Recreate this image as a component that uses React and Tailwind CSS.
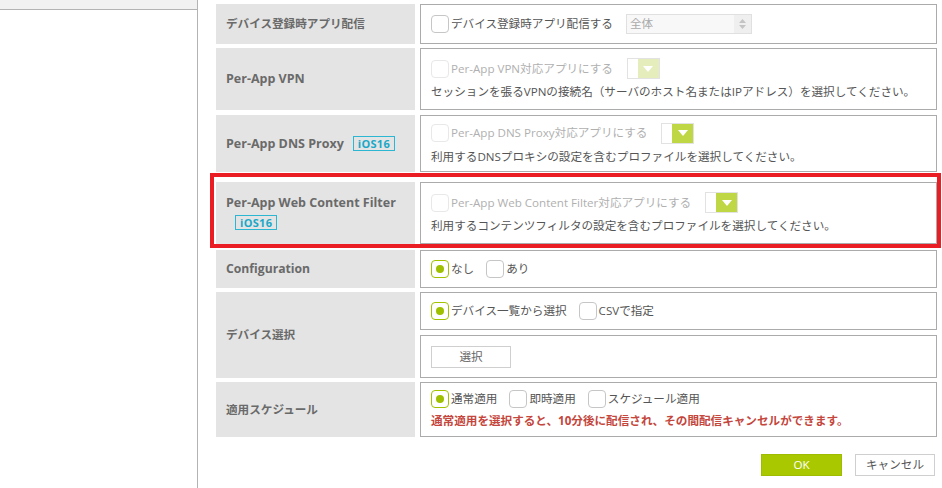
import React from "react";

// Settings form: app distribution options

const Box = ({ checked = false, disabled = false }) => (
    <span
        className={`inline-flex h-[18px] w-[18px] shrink-0 items-center justify-center rounded-[4px] bg-white ${
            checked
                ? "border-[1.5px] border-[#a2c200]"
                : disabled
                ? "border border-[#e8e8e8]"
                : "border border-[#c6c6c6]"
        }`}
    >
        {checked && <span className="h-[8px] w-[8px] rounded-full bg-[#9fc000]" />}
    </span>
);

const Option = ({ checked, disabled, children }) => (
    <span className={`inline-flex items-center gap-[2px] ${disabled ? "text-[#b0b0b0]" : "text-[#555]"}`}>
        <Box checked={checked} disabled={disabled} />
        <span>{children}</span>
    </span>
);

const Dropdown = ({ pale = false }) => (
    <span className="inline-flex h-[21px] w-[33px] border border-[#e2e2e2] bg-white">
        <span className="w-[10px]" />
        <span className={`flex flex-1 items-center justify-center ${pale ? "bg-[#e4edbb]" : "bg-[#bfd744]"}`}>
            <svg width="10" height="6" viewBox="0 0 10 6">
                <polygon points="0,0 10,0 5,6" fill="#fff" />
            </svg>
        </span>
    </span>
);

const Badge = () => (
    <span className="inline-flex h-[15px] items-center border border-[#2bb6d2] px-[4px] text-[11px] font-bold leading-none tracking-[0.3px] text-[#1aa8c8]">
        iOS16
    </span>
);

const Label = ({ children, className = "" }) => (
    <div className={`flex w-[199px] shrink-0 flex-col justify-center bg-[#e4e4e4] pl-[10px] font-bold text-[#6a6a6a] ${className}`}>
        {children}
    </div>
);

const Cell = ({ children, className = "" }) => (
    <div className={`flex flex-1 flex-col justify-center gap-[5px] border border-[#ababab] bg-white pl-[10px] ${className}`}>
        {children}
    </div>
);

export default function App() {
    return (
        <div className="flex h-[488px] w-[942px] overflow-hidden bg-white text-[11.6px] leading-[16px] text-[#555] font-['Open_Sans','Noto_Sans_CJK_JP',sans-serif]">
            {/* Sidebar */}
            <aside className="w-[198px] shrink-0 border-r border-[#b3b3b3]">
                <div className="h-[10px] border-b border-[#b3b3b3] bg-[#f1f1f1]" />
            </aside>

            {/* Form */}
            <main className="flex flex-1 flex-col pl-[18px] pr-[5px] pt-[4px]">
                <div className="flex h-[40px] gap-[5px]">
                    <Label>デバイス登録時アプリ配信</Label>
                    <Cell>
                        <div className="flex items-center gap-[13px]">
                            <Option>デバイス登録時アプリ配信する</Option>
                            <span className="flex h-[20px] w-[126px] items-center justify-between border border-[#e0e0e0] bg-[#f8f8f8] pl-[3px] text-[#aaa]">
                                <span>全体</span>
                                <span className="flex h-full w-[17px] flex-col items-center justify-center gap-[2px] bg-[#efefef]">
                                    <svg width="7" height="4" viewBox="0 0 7 4"><polygon points="0,4 7,4 3.5,0" fill="#c4c4c4" /></svg>
                                    <svg width="7" height="4" viewBox="0 0 7 4"><polygon points="0,0 7,0 3.5,4" fill="#c4c4c4" /></svg>
                                </span>
                            </span>
                        </div>
                    </Cell>
                </div>

                <div className="mt-[4px] flex h-[62px] gap-[5px]">
                    <Label className="text-[12.5px]">Per-App VPN</Label>
                    <Cell className="gap-[4px]">
                        <div className="flex items-center gap-[14px]">
                            <Option disabled>Per-App VPN対応アプリにする</Option>
                            <Dropdown pale />
                        </div>
                        <div>セッションを張るVPNの接続名（サーバのホスト名またはIPアドレス）を選択してください。</div>
                    </Cell>
                </div>

                <div className="mt-[5px] flex h-[57px] gap-[5px]">
                    <Label>
                        <div className="flex items-center gap-[9px]">
                            <span className="text-[12.5px]">Per-App DNS Proxy</span>
                            <Badge />
                        </div>
                    </Label>
                    <Cell className="gap-[4px]">
                        <div className="flex items-center gap-[14px]">
                            <Option disabled>Per-App DNS Proxy対応アプリにする</Option>
                            <Dropdown />
                        </div>
                        <div>利用するDNSプロキシの設定を含むプロファイルを選択してください。</div>
                    </Cell>
                </div>

                <div className="relative mt-[10px] flex h-[62px] gap-[5px]">
                    <Label className="gap-[4px]">
                        <span className="text-[12.5px]">Per-App Web Content Filter</span>
                        <span className="pl-[9px]">
                            <Badge />
                        </span>
                    </Label>
                    <Cell className="gap-[4px]">
                        <div className="flex items-center gap-[14px]">
                            <Option disabled>Per-App Web Content Filter対応アプリにする</Option>
                            <Dropdown />
                        </div>
                        <div>利用するコンテンツフィルタの設定を含むプロファイルを選択してください。</div>
                    </Cell>
                    {/* highlight annotation */}
                    <div className="pointer-events-none absolute -bottom-[4px] -left-[6px] -right-[4px] -top-[9px] border-[4px] border-[#ea1c24]" />
                </div>

                <div className="mt-[6px] flex h-[38px] gap-[5px]">
                    <Label className="text-[12.2px]">Configuration</Label>
                    <Cell>
                        <div className="flex items-center gap-[12px]">
                            <Option checked>なし</Option>
                            <Option>あり</Option>
                        </div>
                    </Cell>
                </div>

                <div className="mt-[4px] flex h-[86px] gap-[5px]">
                    <Label>デバイス選択</Label>
                    <div className="flex flex-1 flex-col gap-[5px]">
                        <Cell className="h-[38px] flex-none">
                            <div className="flex items-center gap-[12px]">
                                <Option checked>デバイス一覧から選択</Option>
                                <Option>CSVで指定</Option>
                            </div>
                        </Cell>
                        <Cell>
                            <button className="h-[22px] w-[80px] border border-[#cfcfcf] bg-white text-[#666]">選択</button>
                        </Cell>
                    </div>
                </div>

                <div className="mt-[4px] flex h-[55px] gap-[5px]">
                    <Label>適用スケジュール</Label>
                    <Cell className="gap-[2px]">
                        <div className="flex items-center gap-[12px]">
                            <Option checked>通常適用</Option>
                            <Option>即時適用</Option>
                            <Option>スケジュール適用</Option>
                        </div>
                        <div className="font-bold text-[#c4463c]">
                            通常適用を選択すると、10分後に配信され、その間配信キャンセルができます。
                        </div>
                    </Cell>
                </div>

                <div className="mt-[17px] flex justify-end gap-[13px] pr-[2px]">
                    <button className="h-[22px] w-[81px] border border-[#a0bc00] bg-[#aac800] text-white">OK</button>
                    <button className="h-[22px] w-[80px] border border-[#cfcfcf] bg-white text-[#555]">キャンセル</button>
                </div>
            </main>
        </div>
    );
}
